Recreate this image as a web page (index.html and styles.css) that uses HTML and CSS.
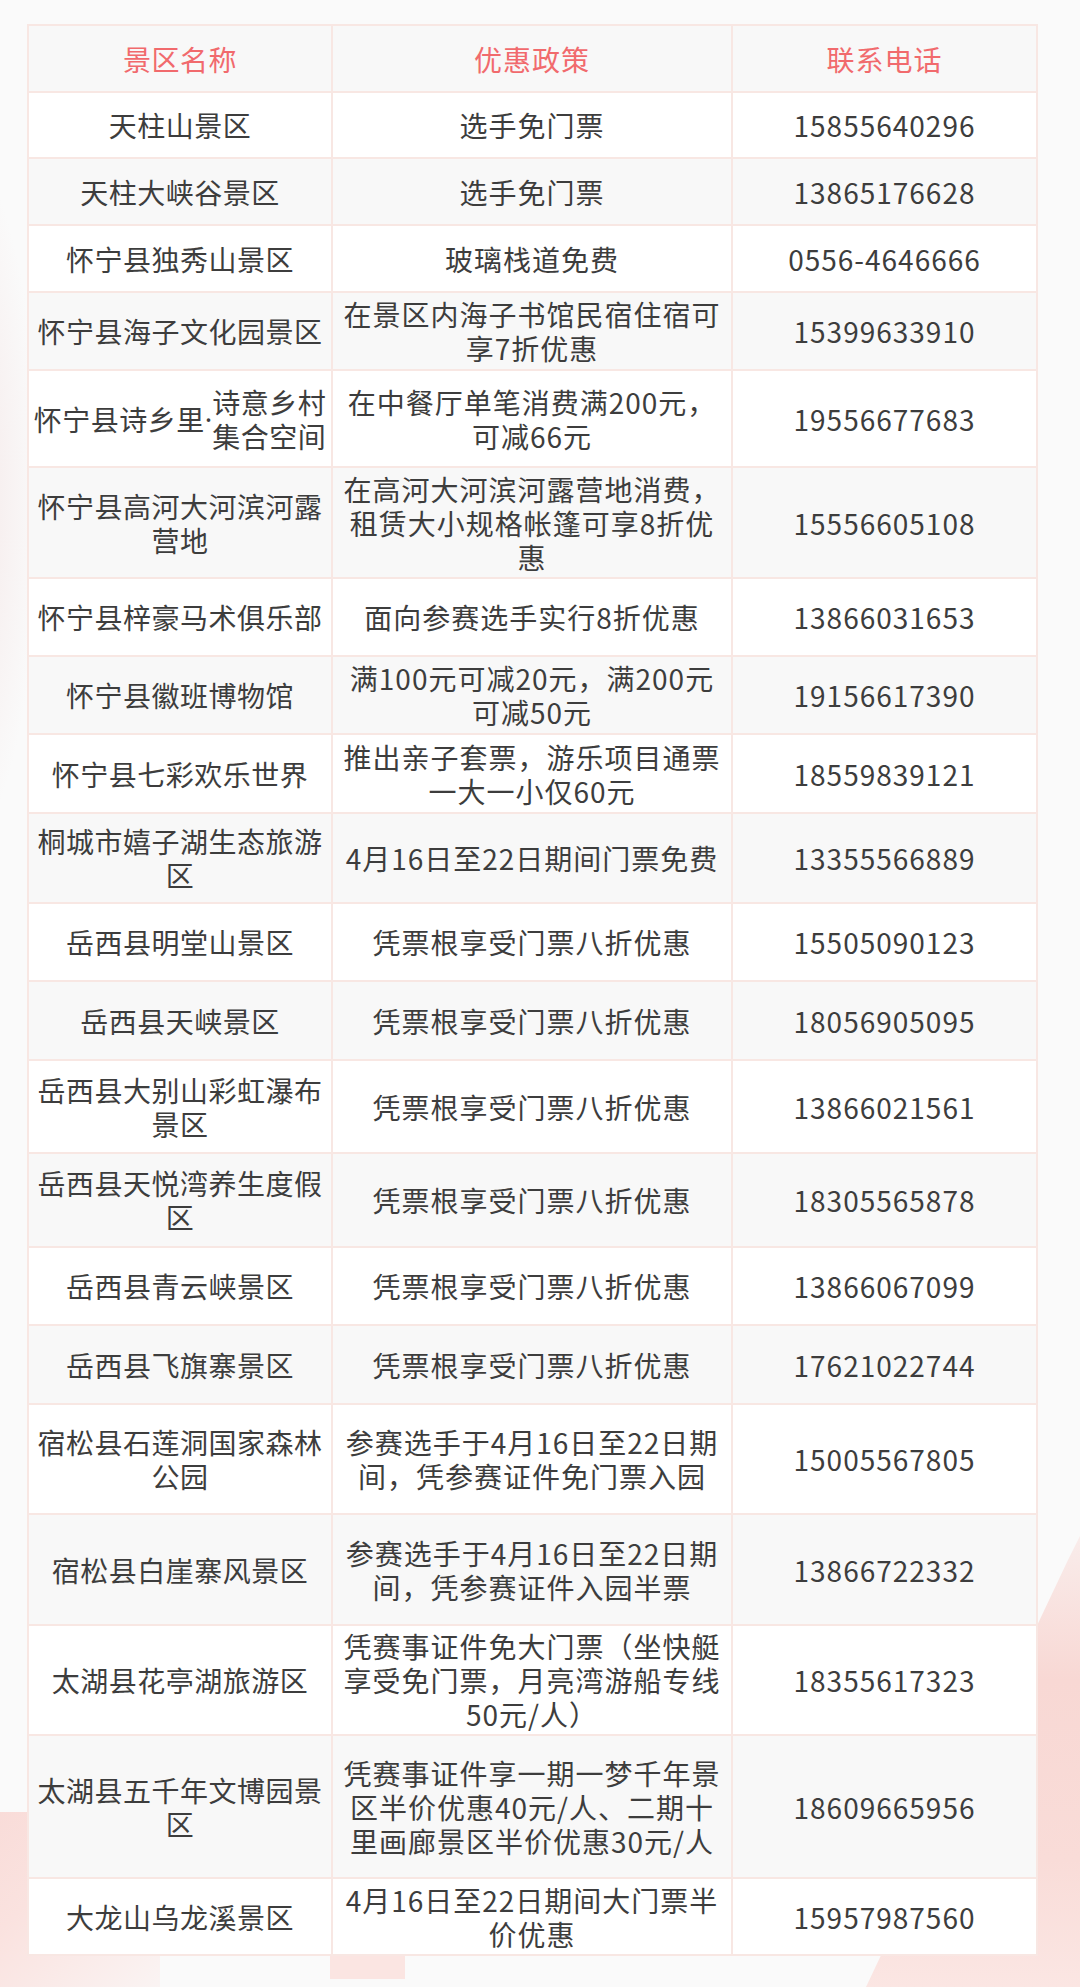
FILE: index.html
```html
<!DOCTYPE html>
<html lang="zh-CN">
<head>
<meta charset="utf-8">
<title>景区优惠政策</title>
<link rel="stylesheet" href="styles.css">
</head>
<body>
<div class="page">
  <div class="deco-top"></div>
  <div class="deco-left"></div>
  <div class="deco-right"></div>
  <div class="sheet">
    <div class="row head h65"><div class="cell c1">景区名称</div><div class="cell c2">优惠政策</div><div class="cell c3">联系电话</div></div>
    <div class="row h64"><div class="cell c1">天柱山景区</div><div class="cell c2">选手免门票</div><div class="cell c3">15855640296</div></div>
    <div class="row h65"><div class="cell c1">天柱大峡谷景区</div><div class="cell c2">选手免门票</div><div class="cell c3">13865176628</div></div>
    <div class="row h65"><div class="cell c1">怀宁县独秀山景区</div><div class="cell c2">玻璃栈道免费</div><div class="cell c3">0556-4646666</div></div>
    <div class="row h76"><div class="cell c1">怀宁县海子文化园景区</div><div class="cell c2">在景区内海子书馆民宿住宿可<br>享7折优惠</div><div class="cell c3">15399633910</div></div>
    <div class="row h95"><div class="cell c1">怀宁县诗乡里<span class="dot">·</span>诗意乡村<br>集合空间</div><div class="cell c2">在中餐厅单笔消费满200元，<br>可减66元</div><div class="cell c3">19556677683</div></div>
    <div class="row h109"><div class="cell c1">怀宁县高河大河滨河露<br>营地</div><div class="cell c2">在高河大河滨河露营地消费，<br>租赁大小规格帐篷可享8折优<br>惠</div><div class="cell c3">15556605108</div></div>
    <div class="row h76"><div class="cell c1">怀宁县梓豪马术俱乐部</div><div class="cell c2">面向参赛选手实行8折优惠</div><div class="cell c3">13866031653</div></div>
    <div class="row h76"><div class="cell c1">怀宁县徽班博物馆</div><div class="cell c2">满100元可减20元，满200元<br>可减50元</div><div class="cell c3">19156617390</div></div>
    <div class="row h77"><div class="cell c1">怀宁县七彩欢乐世界</div><div class="cell c2">推出亲子套票，游乐项目通票<br>一大一小仅60元</div><div class="cell c3">18559839121</div></div>
    <div class="row h88"><div class="cell c1">桐城市嬉子湖生态旅游<br>区</div><div class="cell c2">4月16日至22日期间门票免费</div><div class="cell c3">13355566889</div></div>
    <div class="row h76"><div class="cell c1">岳西县明堂山景区</div><div class="cell c2">凭票根享受门票八折优惠</div><div class="cell c3">15505090123</div></div>
    <div class="row h77"><div class="cell c1">岳西县天峡景区</div><div class="cell c2">凭票根享受门票八折优惠</div><div class="cell c3">18056905095</div></div>
    <div class="row h91"><div class="cell c1">岳西县大别山彩虹瀑布<br>景区</div><div class="cell c2">凭票根享受门票八折优惠</div><div class="cell c3">13866021561</div></div>
    <div class="row h92"><div class="cell c1">岳西县天悦湾养生度假<br>区</div><div class="cell c2">凭票根享受门票八折优惠</div><div class="cell c3">18305565878</div></div>
    <div class="row h76"><div class="cell c1">岳西县青云峡景区</div><div class="cell c2">凭票根享受门票八折优惠</div><div class="cell c3">13866067099</div></div>
    <div class="row h77"><div class="cell c1">岳西县飞旗寨景区</div><div class="cell c2">凭票根享受门票八折优惠</div><div class="cell c3">17621022744</div></div>
    <div class="row h108"><div class="cell c1">宿松县石莲洞国家森林<br>公园</div><div class="cell c2">参赛选手于4月16日至22日期<br>间，凭参赛证件免门票入园</div><div class="cell c3">15005567805</div></div>
    <div class="row h109"><div class="cell c1">宿松县白崖寨风景区</div><div class="cell c2">参赛选手于4月16日至22日期<br>间，凭参赛证件入园半票</div><div class="cell c3">13866722332</div></div>
    <div class="row h108"><div class="cell c1">太湖县花亭湖旅游区</div><div class="cell c2">凭赛事证件免大门票（坐快艇<br>享受免门票，月亮湾游船专线<br>50元/人）</div><div class="cell c3">18355617323</div></div>
    <div class="row h141"><div class="cell c1">太湖县五千年文博园景<br>区</div><div class="cell c2">凭赛事证件享一期一梦千年景<br>区半价优惠40元/人、二期十<br>里画廊景区半价优惠30元/人</div><div class="cell c3">18609665956</div></div>
    <div class="row h75"><div class="cell c1">大龙山乌龙溪景区</div><div class="cell c2">4月16日至22日期间大门票半<br>价优惠</div><div class="cell c3">15957987560</div></div>
  </div>
  <div class="tab"></div>
</div>
</body>
</html>
```
FILE: styles.css
```css
html, body {
  margin: 0;
  padding: 0;
  background: #fafafa;
}

.page {
  position: relative;
  width: 1080px;
  height: 1987px;
  overflow: hidden;
  box-sizing: border-box;
  padding: 24px 0 0 27px;
  font-family: "Noto Sans CJK SC", "Noto Sans", sans-serif;
  color: #3d3d3d;
  background: #fafafa;
}

.deco-top {
  position: absolute;
  left: -120px;
  top: 150px;
  width: 160px;
  height: 700px;
  border-radius: 80px;
  background: radial-gradient(closest-side, #f4e6e6 0%, rgba(250, 250, 250, 0) 100%);
}

.deco-left {
  position: absolute;
  left: -260px;
  top: 1812px;
  width: 420px;
  height: 420px;
  border-radius: 70px;
  background: linear-gradient(135deg, #f7cfcb 0%, #fae2df 45%, rgba(250, 250, 250, 0) 80%);
}

.deco-right {
  position: absolute;
  left: 0;
  top: 0;
  width: 1080px;
  height: 1987px;
  clip-path: polygon(1068px 1560px, 1080px 1536px, 1080px 1987px, 866px 1987px);
  background: linear-gradient(to bottom, rgba(248, 214, 210, 0) 1440px, #f8d8d4 1680px, #f9dcd8 1860px, #fbe6e3 1987px);
}

.sheet {
  position: relative;
  z-index: 1;
  width: 1011px;
  box-sizing: border-box;
  padding: 2px;
  display: flex;
  flex-direction: column;
  gap: 2px;
  background: #f8e7e3;
}

.row {
  display: grid;
  grid-template-columns: 302px 398px 303px;
  gap: 2px;
}

.row:nth-child(odd) .cell {
  background: #f8f8f8;
}

.row:nth-child(even) .cell {
  background: #ffffff;
}

.cell {
  display: flex;
  align-items: center;
  justify-content: center;
  text-align: center;
  font-size: 28px;
  line-height: 34px;
  letter-spacing: 1px;
  box-sizing: border-box;
}

.c1 {
  padding: 0 3px;
  letter-spacing: 0.5px;
}

.c2 {
  padding: 0 6px;
}

.c3 {
  padding: 0 6px;
}

.dot {
  font-family: "Noto Sans", "DejaVu Sans", sans-serif;
  letter-spacing: 0;
}

.head .cell {
  color: #f16a6d;
}

.h64 { height: 64px; }
.h65 { height: 65px; }
.h75 { height: 75px; }
.h76 { height: 76px; }
.h77 { height: 77px; }
.h88 { height: 88px; }
.h91 { height: 91px; }
.h92 { height: 92px; }
.h95 { height: 95px; }
.h108 { height: 108px; }
.h109 { height: 109px; }
.h141 { height: 141px; }

.tab {
  width: 75px;
  height: 23px;
  margin-left: 303px;
  background: #fbe5e2;
}
```
